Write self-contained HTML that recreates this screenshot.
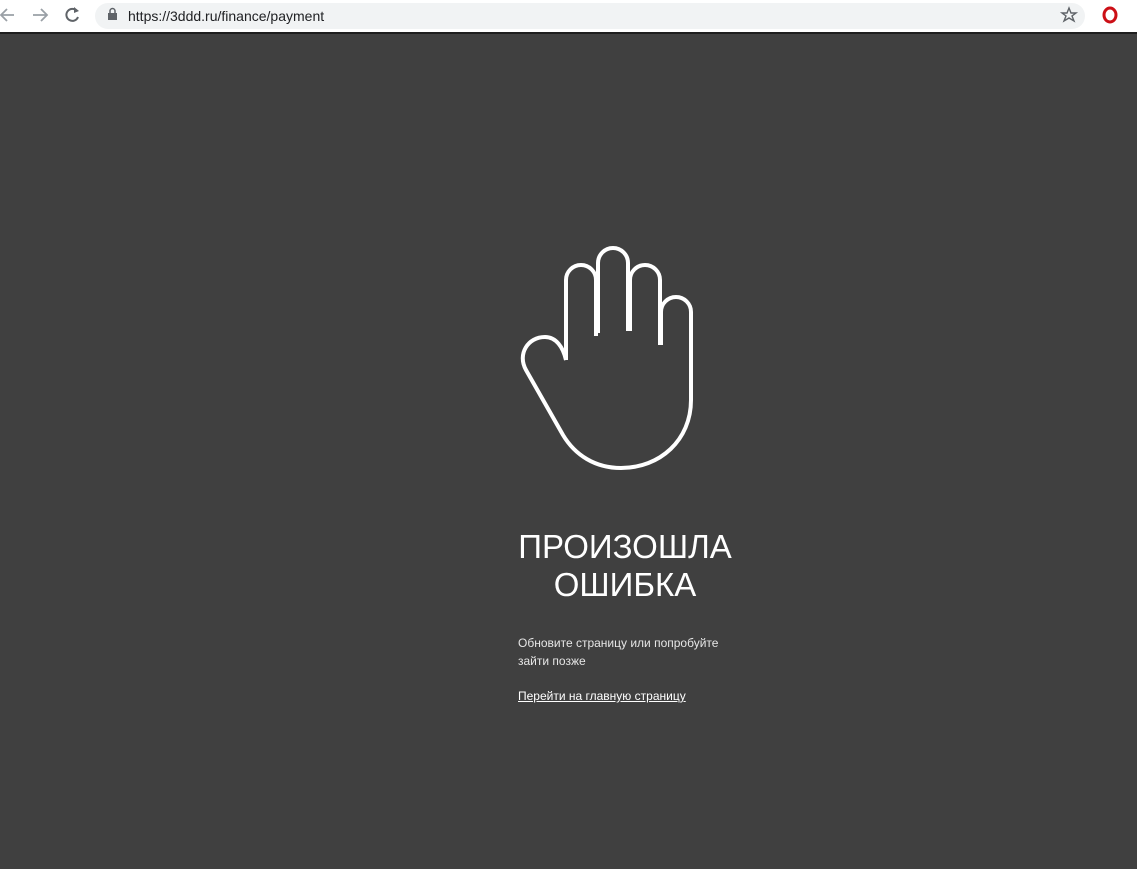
<!DOCTYPE html>
<html><head><meta charset="utf-8"><style>
body{margin:0;width:1137px;height:869px;overflow:hidden;background:#404040;font-family:"Liberation Sans",sans-serif;}
.bar{position:absolute;left:0;top:0;width:1137px;height:32px;background:#fff;border-bottom:2px solid #1e1e1e;}
.url{position:absolute;left:95px;top:3px;width:990px;height:26px;border-radius:13px;background:#f1f3f4;}
.url span{position:absolute;left:33px;top:5px;font-size:14px;color:#202124;}
.t{position:absolute;left:425px;width:400px;text-align:center;color:#fff;font-size:33px;line-height:38px;top:528px;}
.p{position:absolute;left:518px;top:634px;color:#e6e6e6;font-size:12px;line-height:18px;width:220px;}
.a{position:absolute;left:518px;top:689px;color:#fff;font-size:12px;text-decoration:underline;}
</style></head><body>
<div class="bar">
<div class="url"><span>https://3ddd.ru/finance/payment</span></div>
<svg width="1137" height="32" style="position:absolute;left:0;top:0;z-index:2">
<g stroke="#9aa0a6" stroke-width="1.8" fill="none"><path d="M14 15H2M7 9L1 15L7 21"/><path d="M33 15H46M41 9L47 15L41 21"/></g>
<path d="M77 11A6 6 0 1 0 78 17" stroke="#5f6368" stroke-width="2" fill="none"/><path d="M74 7L79 11L74 13Z" fill="#5f6368"/>
<rect x="108" y="13" width="9" height="7" fill="#5f6368"/><path d="M110 13V11A2.5 2.5 0 0 1 115 11V13" stroke="#5f6368" stroke-width="1.5" fill="none"/>
<path d="M1069 8L1071 13L1076 13L1072 16L1074 21L1069 18L1064 21L1066 16L1062 13L1067 13Z" stroke="#5f6368" stroke-width="1.4" fill="none"/>
<ellipse cx="1110" cy="15" rx="6" ry="7" stroke="#cc0f16" stroke-width="3" fill="none"/>
</svg>
</div>
<svg width="1137" height="869" style="position:absolute;left:0;top:0" fill="none" stroke="#fff" stroke-width="4" stroke-linejoin="round">
<path d="M566,360 L566,280 A15,15 0 0 1 596,280 L596,336"/>
<path d="M598,333 L598,263 A15,15 0 0 1 628,263 L628,331"/>
<path d="M630,331 L630,280 A15,15 0 0 1 660,280 L660,345"/>
<path d="M661,345 L661,312 A15,15 0 0 1 691,312 L691,400 C691,440 660,468 621,468 C595,468 575,455 563,435 L526,370 C517,354 528,337 545,337 C556,337 563,347 566,360"/>
</svg>
<div class="t">ПРОИЗОШЛА<br>ОШИБКА</div>
<div class="p">Обновите страницу или попробуйте зайти позже</div>
<div class="a">Перейти на главную страницу</div>
</body></html>
